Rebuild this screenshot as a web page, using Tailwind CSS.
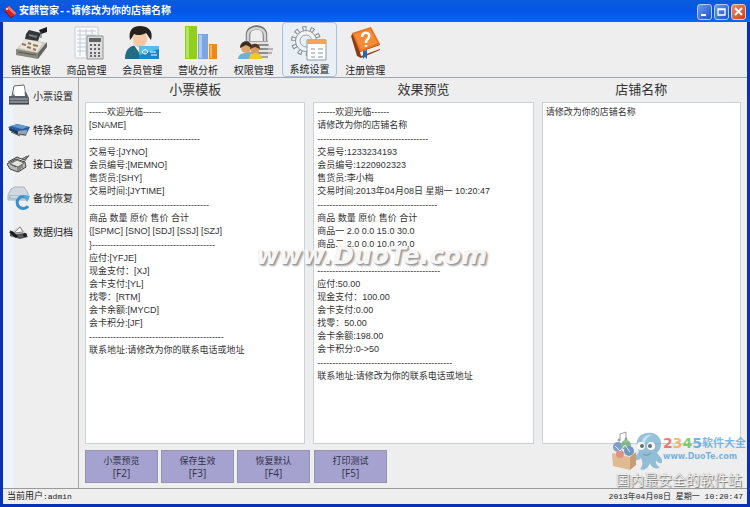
<!DOCTYPE html>
<html lang="zh-CN">
<head>
<meta charset="utf-8">
<title>安麒管家--请修改为你的店铺名称</title>
<script src="https://cdn.jsdelivr.net/npm/@tailwindcss/browser@4"></script>
</head>
<body class="relative flex h-screen flex-col overflow-hidden bg-[#0831b5] font-['Liberation_Sans','Noto_Sans_CJK_SC',sans-serif] text-[#333]">

<header class="flex h-[22px] shrink-0 items-center bg-linear-to-b from-[#0a5ddc] via-[#0454e6] to-[#0468fb] pt-[2px] pr-1 pl-1">
  <svg class="h-4 w-3 shrink-0" viewBox="0 0 12 16" aria-hidden="true"><path d="M1 3l4-1 7 7-5 5-6-7z" fill="#d8231c"/><path d="M5 2l7 7-1 2-8-7z" fill="#f2796c"/><circle cx="3" cy="5" r="1" fill="#fff"/><path d="M1 7l6 7 2-2" fill="none" stroke="#80100e"/></svg>
  <h1 class="ml-[3px] flex-1 font-['Liberation_Mono','Noto_Sans_CJK_SC',monospace] text-[10px] leading-4 font-bold whitespace-nowrap text-white">安麒管家--请修改为你的店铺名称</h1>
  <div class="flex gap-[2px]">
    <button aria-label="最小化" class="h-4 w-[15px] rounded-[3px] border border-[#b5ccf5] bg-linear-to-br from-[#6b98ef] to-[#1c50cd]"><svg class="block" viewBox="0 0 13 14"><path d="M3 10h5" stroke="#fff" stroke-width="2"/></svg></button>
    <button aria-label="最大化" class="h-4 w-[15px] rounded-[3px] border border-[#b5ccf5] bg-linear-to-br from-[#6b98ef] to-[#1c50cd]"><svg class="block" viewBox="0 0 13 14"><path d="M3 4h7v6H3zM3 4.500h7" fill="none" stroke="#fff" stroke-width="1.300"/></svg></button>
    <button aria-label="关闭" class="h-4 w-[15px] rounded-[3px] border border-[#f0c4b8] bg-linear-to-br from-[#ee8a68] to-[#ce3b18]"><svg class="block" viewBox="0 0 13 14"><path d="M3 3l7 7M10 3l-7 7" stroke="#fff" stroke-width="1.900"/></svg></button>
  </div>
</header>

<div class="mx-[3px] mb-[3px] flex min-h-0 flex-1 flex-col bg-[#eeeeee]">
  <nav aria-label="主菜单" class="h-14 shrink-0 border-b border-[#a0a6b0]">
    <div class="grid h-full w-[390px] grid-cols-7 text-[10px] leading-3 text-[#222]">
      <button class="flex flex-col items-center justify-between pt-px">
        <svg class="h-10 w-10" viewBox="0 0 40 40"><path d="M5 27l10-12 21 5-9 15-22-3z" fill="#c8c6bd"/><path d="M5 26v6l22 4v-6z" fill="#8b897f"/><path d="M27 30l9-11v5l-9 12z" fill="#66655f"/><path d="M14 16l18 4-6 9-18-4z" fill="#e9e6dc"/><path d="M15 11l3-4 12 3-3 8-13-2z" fill="#33353a"/><path d="M28 7l8-3v5l-6 2z" fill="#191c21"/><path d="M30 9v6" stroke="#555"/><path d="M18 12l8 2" stroke="#71817d" stroke-width="2"/><path d="M11 21l4 1M17 20l3 1M22 22l5 1M16 24l4 1M22 26l3 1" stroke="#987458" stroke-width="2"/><path d="M7 29l18 3" stroke="#55534d"/></svg>
        <span class="-mt-2">销售收银</span></button>
      <button class="flex flex-col items-center justify-between pt-px">
        <svg class="h-10 w-10" viewBox="0 0 40 40"><path d="M8 4h23v31H8z" fill="#f9fafc" stroke="#c8cbd3"/><path d="M10 8h19M10 12h19M10 16h19M10 20h19M10 24h19M10 28h19M13 6v27M19 6v27M25 6v27" stroke="#c4ccd8"/><path d="M20 13h16v23H20z" fill="#ddd" stroke="#909090"/><path d="M22 15h12v4H22z" fill="#5d6560"/><path d="M23 22h2m2 0h2m2 0h2M23 26h2m2 0h2m2 0h2M23 30h2m2 0h2m2 0h2M23 33h2m2 0h2m2 0h2" stroke="#666" stroke-width="2"/></svg>
        <span class="-mt-2">商品管理</span></button>
      <button class="flex flex-col items-center justify-between pt-px">
        <svg class="h-10 w-10" viewBox="0 0 40 40"><path d="M3 36c0-11 6-14 14-14s15 4 15 14z" fill="#236c82"/><path d="M12 22l6 9 6-9z" fill="#fff"/><ellipse cx="18" cy="16" rx="7" ry="9" fill="#f3c9a5"/><path d="M8 17C6 7 11 3 18 3s14 4 11 14c-2-2-3-5-5-7-5 3-10 2-12 1-1 2-2 4-4 6z" fill="#25211f"/><path d="M17 23h20v13H17z" fill="#1587c9"/><path d="M17 23h20v3l-20 6z" fill="#5dbbe6"/><path d="M20 29q3-5 6 0-3 4-6 0M28 29h6M29 32h6" fill="none" stroke="#fff"/></svg>
        <span class="-mt-2">会员管理</span></button>
      <button class="flex flex-col items-center justify-between pt-px">
        <svg class="h-10 w-10" viewBox="0 0 40 40"><path d="M7 3h12v33H7z" fill="#90cf1b"/><path d="M8 4h3v31H8z" fill="#b4e45d"/><path d="M20 11h10v25H20z" fill="#7ba6e4"/><path d="M21 12h3v23h-3z" fill="#abc9f2"/><path d="M31 21h8v15h-8z" fill="#ed8a14"/><path d="M32 22h2v13h-2z" fill="#f8b35c"/></svg>
        <span class="-mt-2">营收分析</span></button>
      <button class="flex flex-col items-center justify-between pt-px">
        <svg class="h-10 w-10" viewBox="0 0 40 40"><path d="M14 20v-8c0-10 17-10 17 0v8" fill="none" stroke="#747474" stroke-width="4.500"/><path d="M14 20v-8c0-9 17-9 17 0v8" fill="none" stroke="#d6d6d6" stroke-width="2.500"/><path d="M12 18h22v17H12z" fill="#a4a4a4"/><path d="M14 20h20M14 24h22M15 28h24M15 32h22" stroke="#e3e3e3" stroke-width="2"/><path d="M24 22h11M24 26h15M24 30h14" stroke="#777"/><circle cx="12" cy="25" r="5" fill="#dda568"/><path d="M6 25c0-9 12-9 12 0l-6-3z" fill="#3b2c20"/><path d="M4 36c0-8 15-8 15 0z" fill="#70b1da"/><circle cx="21" cy="27" r="4" fill="#d99b63"/><path d="M16 26c0-7 10-7 10 0l-5-2z" fill="#553823"/><path d="M15 36c0-8 13-8 13 0z" fill="#ecc82d"/></svg>
        <span class="-mt-2">权限管理</span></button>
      <button aria-current="page" class="flex flex-col items-center justify-between rounded-sm border border-[#a9c0db] bg-[#e9eff4]">
        <svg class="h-10 w-10" viewBox="0 0 40 40"><circle cx="17" cy="18" r="12.500" fill="none" stroke="#7f8b96" stroke-width="5" stroke-dasharray="4 3.854"/><circle cx="17" cy="18" r="12.500" fill="none" stroke="#f4f7f9" stroke-width="3" stroke-dasharray="2 5.854" stroke-dashoffset="-1"/><circle cx="17" cy="18" r="10.500" fill="#f1f4f7" stroke="#8d98a2"/><circle cx="17" cy="18" r="6" fill="#e9eff4" stroke="#98a4af"/><path d="M18 17h19v20H18z" fill="#fff" stroke="#8b9aad"/><path d="M18 16h19v5H18z" fill="#f3a35c"/><path d="M22 26h4m3 0h5M22 30h4m3 0h5M22 34h4m3 0h5" stroke="#c2cad6" stroke-width="2"/></svg>
        <span class="-mt-2">系统设置</span></button>
      <button class="flex flex-col items-center justify-between pt-px">
        <svg class="h-10 w-10" viewBox="0 0 40 40"><path d="M8 10l7 18 20-7v6l-19 8-4-2L6 13z" fill="#8e3b16"/><path d="M15 29l20-7v4l-19 7z" fill="#f1eee8"/><path d="M7 10l19-6 9 17-20 8z" fill="#ea701d"/><path d="M9 11l16-5 8 14-17 7z" fill="#f38b37"/><path d="M17 14c0-6 9-5 7 0-1 3-3 2-3 6M21 22v2" fill="none" stroke="#fff" stroke-width="2.500"/><path d="M18 28l4-1v9l-2-2-2 2z" fill="#2369ae"/></svg>
        <span class="-mt-2">注册管理</span></button>
    </div>
  </nav>

  <div class="flex min-h-0 flex-1">
    <nav aria-label="系统设置" class="w-[76px] shrink-0 border-r border-[#a8a8a8] bg-linear-to-r from-[#edf5fa] from-[10px] to-[#eeeeee] to-[11px] pt-px text-[10px] text-[#222]">
      <button class="flex h-[34px] w-full items-center gap-[2px] pl-1"><svg class="h-6 w-6" viewBox="0 0 24 24"><path d="M5 12L7 2l10-1 2 11z" fill="#f9fafb" stroke="#62666c"/><path d="M2 12h4l1-4h12l3 6v6H2z" fill="#596069"/><path d="M7 10l1-7 9-1 1 10H8z" fill="#fff"/><path d="M3 15h18M3 18h18" stroke="#aeb4ba"/><path d="M2 20h20" stroke="#292f38"/></svg><span>小票设置</span></button>
      <button class="flex h-[34px] w-full items-center gap-[2px] pl-1"><svg class="h-6 w-6" viewBox="0 0 24 24"><path d="M1 9l9-3 13 3-4 8-10-2z" fill="#285f9e"/><path d="M4 8l7-2 10 3-6 2z" fill="#6798cd"/><path d="M2 10l9 3v4l-9-5z" fill="#243956"/><path d="M11 13l9-1-1 6-8-1z" fill="#9aa4af"/><path d="M12 16l7 1M4 14l9 4" stroke="#4b5969"/></svg><span>特殊条码</span></button>
      <button class="flex h-[34px] w-full items-center gap-[2px] pl-1"><svg class="h-6 w-6" viewBox="0 0 24 24"><path d="M1 10l9-5 7 3 5-4M3 17l-3-5 9-5 9 3 1 5-8 5z" fill="#b9b9b7" stroke="#424242"/><path d="M3 12l7-4 7 3-6 4z" fill="#e4e4e0" stroke="#666"/><path d="M11 15v4m2-5v4m2-5v3M5 13l4 2M17 10l5-7M15 7l5-3" stroke="#565656"/></svg><span>接口设置</span></button>
      <button class="flex h-[34px] w-full items-center gap-[2px] pl-1"><svg class="h-6 w-6" viewBox="0 0 24 24"><path d="M4 3l4-2h9l4 6v7H1V9z" fill="#d1d8e0" stroke="#a7b2be"/><path d="M2 9h18v4H2z" fill="#aebccb"/><path d="M4 11h8" stroke="#eef3f8"/><path d="M21 13a6 6 0 1 0 0 7" fill="none" stroke="#398fcb" stroke-width="3"/><path d="M16 9l7 1-3 6z" fill="#52a8df"/></svg><span>备份恢复</span></button>
      <button class="flex h-[34px] w-full items-center gap-[2px] pl-1"><svg class="h-6 w-6" viewBox="0 0 24 24"><path d="M4 12l9-6 8 10-7 2-10-1z" fill="#d2d2d2"/><path d="M3 10l6 4 9-1 3 4-8 2-10-3z" fill="#55595a"/><path d="M7 13l6-6 3 5z" fill="#f8f8f8" stroke="#888"/><path d="M2 12l3-1 6 5-2 2z" fill="#171a1c"/><circle cx="18" cy="15" r="2" fill="#1d2022"/></svg><span>数据归档</span></button>
    </nav>

    <main class="flex min-w-0 flex-1 flex-col pr-[6px] pb-[5px] pl-[6px]">
      <div class="grid min-h-0 flex-1 grid-cols-[220fr_220fr_199fr] gap-x-2">
        <section class="flex min-h-0 flex-col">
          <h2 class="py-1 text-center text-[13px] leading-4">小票模板</h2>
          <div class="flex-1 border border-[#c9d2d8] bg-white px-[3px] pt-[3px] text-[9px] leading-[13px] whitespace-nowrap">
            <p>------欢迎光临------</p>
            <p>[SNAME]</p>
            <p class="leading-[14px]">-------------------------------------</p>
            <p>交易号:[JYNO]</p>
            <p>会员编号:[MEMNO]</p>
            <p>售货员:[SHY]</p>
            <p>交易时间:[JYTIME]</p>
            <p class="leading-[14px]">----------------------------------------</p>
            <p>商品 数量 原价 售价 合计</p>
            <p>{[SPMC] [SNO] [SDJ] [SSJ] [SZJ]</p>
            <p class="leading-[14px]">}-----------------------------------------</p>
            <p>应付:[YFJE]</p>
            <p>现金支付：[XJ]</p>
            <p>会卡支付:[YL]</p>
            <p>找零：[RTM]</p>
            <p>会卡余额:[MYCD]</p>
            <p>会卡积分:[JF]</p>
            <p class="leading-[14px]">---------------------------------------------</p>
            <p>联系地址:请修改为你的联系电话或地址</p>
          </div>
        </section>
        <section class="flex min-h-0 flex-col">
          <h2 class="py-1 text-center text-[13px] leading-4">效果预览</h2>
          <div class="flex-1 border border-[#c9d2d8] bg-white px-[3px] pt-[3px] text-[9px] leading-[13px] whitespace-nowrap">
            <p>------欢迎光临------</p>
            <p>请修改为你的店铺名称</p>
            <p class="leading-[14px]">-------------------------------------</p>
            <p>交易号:1233234193</p>
            <p>会员编号:1220902323</p>
            <p>售货员:李小梅</p>
            <p>交易时间:2013年04月08日 星期一 10:20:47</p>
            <p class="leading-[14px]">----------------------------------------</p>
            <p>商品 数量 原价 售价 合计</p>
            <p>商品一 2.0 0.0 15.0 30.0</p>
            <p>商品二 2.0 0.0 10.0 20.0</p>
            <p>&nbsp;</p>
            <p class="leading-[14px]">-----------------------------------------</p>
            <p>应付:50.00</p>
            <p>现金支付：100.00</p>
            <p>会卡支付:0.00</p>
            <p>找零：50.00</p>
            <p>会卡余额:198.00</p>
            <p>会卡积分:0-&gt;50</p>
            <p class="leading-[14px]">---------------------------------------------</p>
            <p>联系地址:请修改为你的联系电话或地址</p>
          </div>
        </section>
        <section class="flex min-h-0 flex-col">
          <h2 class="py-1 text-center text-[13px] leading-4">店铺名称</h2>
          <div class="flex-1 border border-[#c9d2d8] bg-white px-[3px] pt-[3px] text-[9px] leading-[13px] whitespace-nowrap">
            <p>请修改为你的店铺名称</p>
          </div>
        </section>
      </div>
      <div class="mt-[6px] flex gap-[3px] font-['Open_Sans','Noto_Sans_CJK_SC',sans-serif] text-[9px] leading-[13px] text-[#303048]">
        <button class="h-[33px] w-[73px] border border-[#9494ad] bg-[#a5a2cf]">小票预览<br><span class="text-[10px]">[F2]</span></button>
        <button class="h-[33px] w-[73px] border border-[#9494ad] bg-[#a5a2cf]">保存生效<br><span class="text-[10px]">[F3]</span></button>
        <button class="h-[33px] w-[73px] border border-[#9494ad] bg-[#a5a2cf]">恢复默认<br><span class="text-[10px]">[F4]</span></button>
        <button class="ml-px h-[33px] w-[73px] border border-[#9494ad] bg-[#a5a2cf]">打印测试<br><span class="text-[10px]">[F5]</span></button>
      </div>
    </main>
  </div>

  <footer class="flex h-4 shrink-0 items-center justify-between border-t border-[#9a9a9a] pr-1 pl-1 font-['Liberation_Mono','Noto_Sans_CJK_SC',monospace] text-[8px] leading-3 text-[#222]">
    <span><span class="text-[9px]">当前用户</span>:admin</span>
    <span>2013年04月08日 星期一 10:20:47</span>
  </footer>
</div>

<div aria-hidden="true" class="pointer-events-none absolute top-[245px] left-[256px] font-['DejaVu_Sans',sans-serif] text-[25px] leading-[22px] font-bold text-[#f6f6f6] italic [text-shadow:1px_1px_1px_#999,2px_2px_2px_#aaa]">www.DuoTe.com</div>

<div aria-hidden="true" class="pointer-events-none absolute right-1 bottom-[18px] w-[136px]">
  <div class="flex items-end gap-px opacity-70">
    <svg class="h-10 w-[52px] shrink-0" viewBox="0 0 52 40"><path d="M10 3l6-2v7M10 3v6" fill="none" stroke="#777"/><circle cx="9" cy="9" r="1.500" fill="#777"/><circle cx="16" cy="8" r="1.500" fill="#777"/><path d="M29 20C22 7 33 0 42 2c10 2 12 13 5 20 4 4 4 7 8 8-3 4-8 2-9-1-1 5 3 7 4 7-4 4-10-1-10-4-2 5-5 8-10 6 3-3 3-7 1-11-4 4-8 2-10-1 4 0 6-2 8-6z" fill="#6ba9cb"/><path d="M32 12C32 5 38 3 42 4c-5 2-6 5-7 8z" fill="#abd3e8"/><circle cx="31" cy="15" r="4" fill="#fff"/><circle cx="41" cy="15" r="4" fill="#fff"/><circle cx="32" cy="15" r="2" fill="#263b48"/><circle cx="40" cy="15" r="2" fill="#263b48"/><path d="M33 23q4 3 8-1" fill="none" stroke="#34718f"/><path d="M2 22l18 4v13L3 35z" fill="#d8a669"/><path d="M20 26l6-5v13l-6 5z" fill="#b67b43"/><circle cx="8" cy="16" r="5" fill="#527fb9"/><circle cx="16" cy="14" r="5" fill="#58a765"/><circle cx="19" cy="20" r="5" fill="#3c73b3"/><circle cx="10" cy="23" r="4" fill="#db6c5e"/><path d="M5 15l5 5 5-6 5 7" fill="none" stroke="#d9e9ff"/></svg>
    <div class="pb-2 whitespace-nowrap">
      <div class="flex items-center leading-4 font-bold text-[#4a9fe0]"><span class="font-['DejaVu_Sans',sans-serif] text-[14px]"><span class="text-[#e8453c]">2</span><span class="text-[#f0a030]">3</span><span class="text-[#56b848]">4</span><span class="text-[#3c95dc]">5</span></span><span class="text-[11px]">软件大全</span></div>
      <div class="font-['DejaVu_Sans',sans-serif] text-[8px] leading-3 font-bold text-[#459bd8]">www.DuoTe.com</div>
    </div>
  </div>
  <div class="pl-[6px] text-[14px] leading-[18px] whitespace-nowrap text-[#eeeeee] [text-shadow:1px_1px_1px_#777,0_0_1px_#999]">国内最安全的软件站</div>
</div>
</body>
</html>
